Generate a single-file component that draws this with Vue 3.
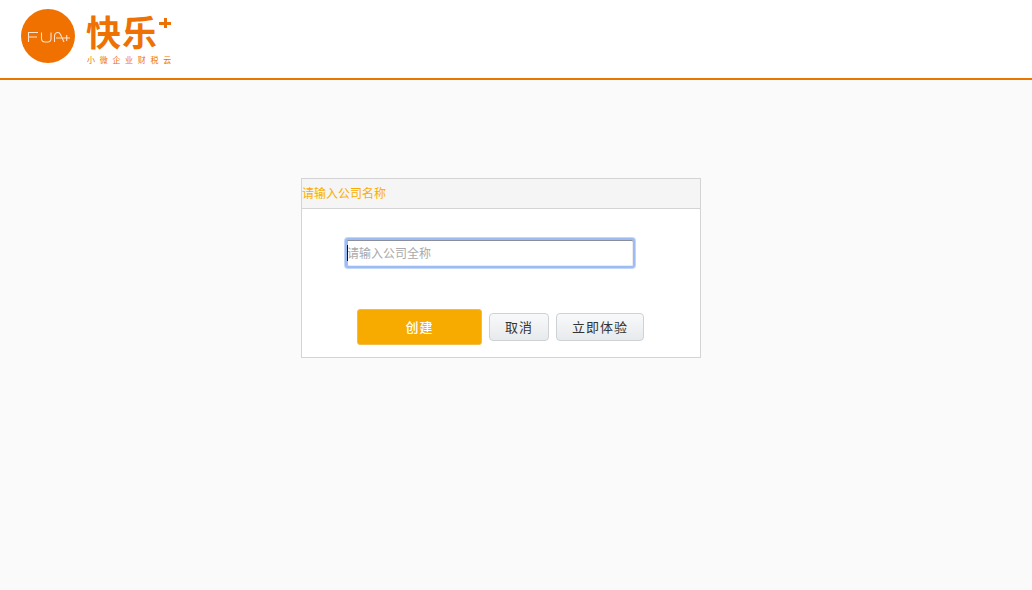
<script setup>
const buttons = [
  { label: '取消', cls: 'cancel' },
  { label: '立即体验', cls: 'trial' },
]
</script>

<template>
  <div class="page">
    <header class="header">
      <div class="logo">
        <div class="badge">
          <svg width="54" height="54" viewBox="0 0 54 54">
            <circle cx="27" cy="27" r="27" fill="#f07000" />
            <g fill="none" stroke="#fde3cb" stroke-width="1.100">
              <path d="M7.500 33V23.500H17M7.500 28H16" />
              <path d="M20.500 23.500V29.500Q20.500 33 24 33H26.500Q30 33 30 29.500V23.500" />
              <path d="M33.500 33V27.500Q33.500 23.500 37 23.500Q38.500 23.500 39.500 25.500L43 33M35 29H49M45.700 26V32" />
            </g>
          </svg>
        </div>
        <div class="brand">
          <div class="brand-top"><span class="brand-name">快乐</span><span class="plus" aria-hidden="true"></span></div>
          <div class="slogan">小微企业财税云</div>
        </div>
      </div>
    </header>
    <main class="main">
      <section class="card">
        <div class="card-head">请输入公司名称</div>
        <div class="card-body">
          <div class="field">
            <input class="input" type="text" placeholder="请输入公司全称" readonly />
            <span class="caret"></span>
          </div>
          <div class="actions">
            <button class="btn create">创建</button>
            <button v-for="b in buttons" :key="b.label" class="btn plain" :class="b.cls">{{ b.label }}</button>
          </div>
        </div>
      </section>
    </main>
  </div>
</template>

<style>
html, body { margin: 0; background: #fafafa; }
</style>

<style scoped>
.page {
  width: 1032px;
  height: 590px;
  overflow: hidden;
  background: #fafafa;
  font-family: "Noto Sans CJK SC", "Liberation Sans", sans-serif;
}
.header {
  height: 78px;
  background: #fff;
  border-bottom: 2px solid #ea7600;
  display: flex;
  align-items: flex-start;
}
.logo {
  display: flex;
  margin: 9px 0 0 21px;
}
.badge { width: 54px; height: 54px; }
.badge svg { display: block; }
.brand {
  margin-left: 11px;
  color: #ee7203;
  width: 90px;
}
.brand-top {
  display: flex;
  align-items: flex-start;
  height: 46px;
}
.brand-name {
  font-size: 35px;
  line-height: 44px;
  font-weight: 700;
  letter-spacing: 1px;
}
.plus {
  position: relative;
  width: 12px;
  height: 10px;
  margin: 9px 0 0 1px;
}
.plus::before,
.plus::after {
  content: "";
  position: absolute;
  background: #ee7203;
}
.plus::before { left: 0; top: 4px; width: 12px; height: 3px; }
.plus::after { left: 5px; top: 0; width: 3px; height: 10px; }
.slogan {
  font-size: 8px;
  line-height: 10px;
  letter-spacing: 4.700px;
  white-space: nowrap;
  margin-left: 1px;
}
.main {
  padding: 98px 0 0 301px;
}
.card {
  width: 400px;
  height: 180px;
  box-sizing: border-box;
  border: 1px solid #d4d4d4;
  background: #fff;
}
.card-head {
  height: 30px;
  box-sizing: border-box;
  background: #f5f5f5;
  border-bottom: 1px solid #d4d4d4;
  color: #f9ad00;
  font-size: 12px;
  line-height: 28px;
}
.card-body {
  display: flex;
  flex-direction: column;
}
.field {
  position: relative;
  width: 290px;
  height: 30px;
  margin: 29px 0 0 43px;
}
.input {
  display: block;
  width: 100%;
  height: 100%;
  box-sizing: border-box;
  border: 2px solid #9dbcf3;
  border-radius: 3px;
  padding: 0 0 2px 0;
  outline: none;
  background: #fff;
  font-family: inherit;
  font-size: 12px;
  box-shadow: 0 0 0 1px #c4d6f8, inset 0 1px 0 #8a8f98, inset 1px 0 0 #b9bcc2, inset -1px -1px 0 #ececec;
}
.input::placeholder { color: #a9a9a9; opacity: 1; }
.caret {
  position: absolute;
  left: 2px;
  top: 7px;
  width: 1px;
  height: 16px;
  background: #111;
}
.actions {
  display: flex;
  justify-content: center;
  align-items: center;
  gap: 7px;
  margin-top: 41px;
  padding-right: 1px;
}
.btn {
  box-sizing: border-box;
  font-family: inherit;
  font-size: 13px;
  letter-spacing: 1px;
  padding: 0 0 1px;
  border-radius: 3px;
}
.create {
  width: 125px;
  height: 36px;
  background: #f7ab00;
  border: 1px solid #f5bb4a;
  color: #fff;
  font-weight: 500;
}
.plain {
  height: 28px;
  border: 1px solid #cfd2d4;
  background: linear-gradient(#f8f9fa, #e7eaec);
  color: #333;
  border-radius: 4px;
}
.cancel { width: 60px; }
.trial { width: 88px; }
</style>
